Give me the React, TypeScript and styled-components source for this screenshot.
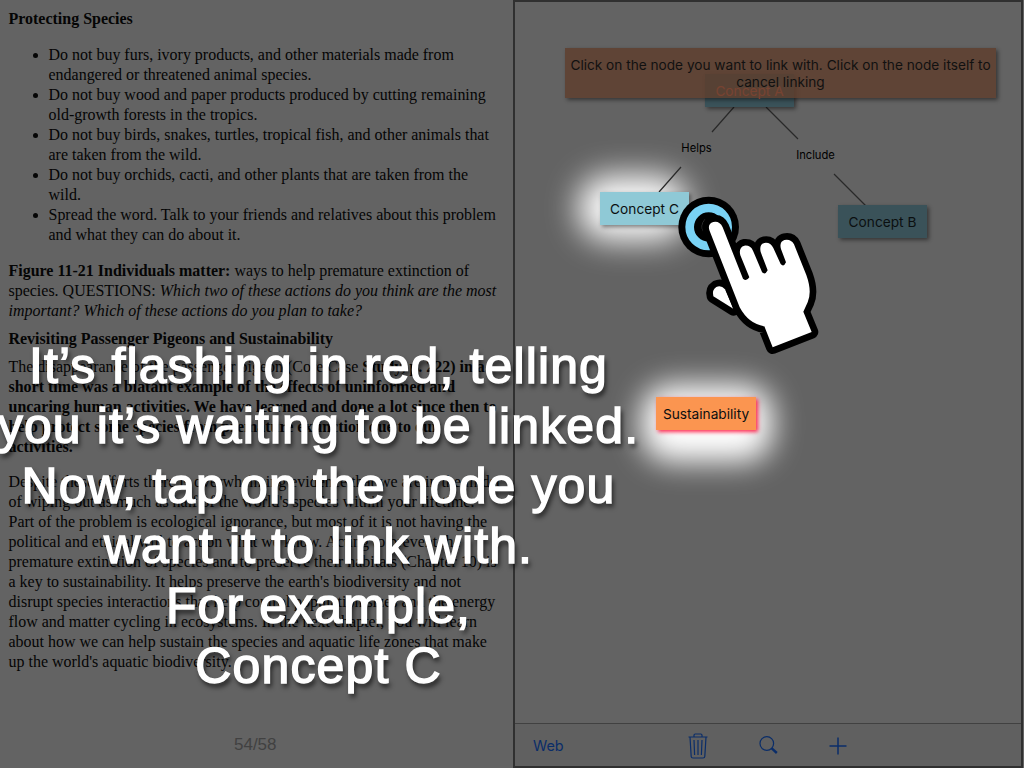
import React from "react";
import styled, { createGlobalStyle } from "styled-components";

const GlobalStyle = createGlobalStyle`
  * { box-sizing: border-box; }
  body { margin: 0; background: #636363; }
`;

const Screen = styled.main`
  position: relative;
  display: flex;
  width: 1024px;
  height: 768px;
  overflow: hidden;
  background: #636363;
`;

const Reader = styled.section`
  display: flex;
  flex-direction: column;
  width: 513px;
  padding: 9px 8px 0 8.5px;
  font: 15.97px/20px "Liberation Serif", serif;
  color: #050505;
`;

const Heading = styled.h2<{ $after: number }>`
  margin: 0 0 ${(p) => p.$after}px;
  font-size: 15.97px;
  line-height: 20px;
`;

const Tips = styled.ul`
  margin: 0 0 16px;
  padding-left: 40px;
`;

const Paragraph = styled.p<{ $after?: number; $bold?: boolean }>`
  margin: 0 0 ${(p) => p.$after ?? 0}px;
  font-weight: ${(p) => (p.$bold ? 700 : 400)};
`;

const Line = styled.span`
  display: block;
  width: max-content;
  white-space: nowrap;
`;

const Light = styled.span`
  font-weight: 400;
`;

const PageCount = styled.footer`
  margin: auto 0 13px;
  padding-right: 3px;
  text-align: center;
  font: 17px/20px "Liberation Sans", sans-serif;
  color: #414141;
`;

const MapPanel = styled.section`
  display: flex;
  flex-direction: column;
  width: 510px;
  height: 768px;
  border: 2px solid #303030;
  font-family: Inter, "Liberation Sans", sans-serif;
`;

const Canvas = styled.div`
  position: relative;
  flex: 1;
`;

const Glow = styled.div<{ $x: number; $y: number; $w: number; $h: number; $blur: number }>`
  position: absolute;
  left: ${(p) => p.$x}px;
  top: ${(p) => p.$y}px;
  width: ${(p) => p.$w}px;
  height: ${(p) => p.$h}px;
  border-radius: 30px;
  background: #fff;
  filter: blur(${(p) => p.$blur}px);
`;

const Links = styled.svg`
  position: absolute;
  inset: 0;
`;

const Node = styled.div<{ $x: number; $y: number; $w: number; $fill: string; $shadow: string; $ink?: string }>`
  position: absolute;
  left: ${(p) => p.$x}px;
  top: ${(p) => p.$y}px;
  display: flex;
  align-items: center;
  justify-content: center;
  width: ${(p) => p.$w}px;
  height: 33px;
  padding-top: 1px;
  background: ${(p) => p.$fill};
  box-shadow: 2px 2px 4px ${(p) => p.$shadow};
  font-size: 13.7px;
  white-space: nowrap;
  color: ${(p) => p.$ink ?? "#0b0f10"};
`;

const LinkLabel = styled.span<{ $x: number; $y: number }>`
  position: absolute;
  left: ${(p) => p.$x}px;
  top: ${(p) => p.$y}px;
  transform: translate(-50%, -50%);
  font-size: 11.2px;
  line-height: 14px;
  color: #000;
`;

const Banner = styled.div`
  position: absolute;
  left: 50px;
  top: 46px;
  width: 431px;
  height: 50px;
  padding-top: 9px;
  background: rgba(94, 61, 45, 0.83);
  box-shadow: 2px 2px 4px rgba(0, 0, 0, 0.45);
  font-size: 13.65px;
  line-height: 17px;
  text-align: center;
  white-space: nowrap;
  color: #111;
`;

const Toolbar = styled.nav`
  display: flex;
  align-items: center;
  height: 43px;
  padding-left: 18px;
  border-top: 1px solid #414141;
  background: #606060;
  font-size: 14.4px;
  color: #0a2d69;
`;

const ToolSlot = styled.span<{ $width: number }>`
  display: flex;
  width: ${(p) => p.$width}px;
  padding-top: 1px;
  align-items: center;
`;

const Hand = styled.svg`
  position: absolute;
  left: 676.67px;
  top: 195px;
`;

const Caption = styled.div`
  position: absolute;
  left: -1.5px;
  top: 336px;
  width: 640px;
  display: flex;
  flex-direction: column;
  align-items: center;
  font: 50px/60px "Liberation Sans", sans-serif;
  letter-spacing: 1.12px;
  color: #fff;
  -webkit-text-stroke: 1.5px #fff;
  text-shadow: 2px 4px 5px rgba(0, 0, 0, 0.75);
`;

const tips = [
  ["Do not buy furs, ivory products, and other materials made from", "endangered or threatened animal species."],
  ["Do not buy wood and paper products produced by cutting remaining", "old-growth forests in the tropics."],
  ["Do not buy birds, snakes, turtles, tropical fish, and other animals that", "are taken from the wild."],
  ["Do not buy orchids, cacti, and other plants that are taken from the", "wild."],
  ["Spread the word. Talk to your friends and relatives about this problem", "and what they can do about it."],
];

const closing = [
  "Despite these efforts there is overwhelming evidence that we are in the midst",
  "of wiping out as much as half of the world's species within your lifetime.",
  "Part of the problem is ecological ignorance, but most of it is not having the",
  "political and ethical will to act on what we know. Acting to prevent the",
  "premature extinction of species and to preserve their habitats (Chapter 10) is",
  "a key to sustainability. It helps preserve the earth's biodiversity and not",
  "disrupt species interactions that help control population sizes and the energy",
  "flow and matter cycling in ecosystems. In the next chapter, you will learn",
  "about how we can help sustain the species and aquatic life zones that make",
  "up the world's aquatic biodiversity.",
];

const caption = [
  "It’s flashing in red, telling",
  "you it’s waiting to be linked.",
  "Now, tap on the node you",
  "want it to link with.",
  "For example,",
  "Concept C",
];

const TrashIcon = () => (
  <svg width="20" height="26" viewBox="0 0 20 26" fill="none" stroke="currentColor">
    <path d="M.5 4h19M6 4V2.2Q6 1 7.2 1h5.6Q14 1 14 2.2V4M2 4l1.200 19.500Q3.300 25 5 25h10q1.700 0 1.800-1.500L18 4" strokeWidth="1.200" />
    <path d="M6 7l.6 15M10 7v15M14 7l-.6 15" strokeWidth="1.200" />
  </svg>
);

const SearchIcon = () => (
  <svg width="19" height="19" viewBox="0 0 19 19" fill="none" stroke="currentColor">
    <circle cx="7.800" cy="7.500" r="6.800" strokeWidth="1.200" />
    <path d="M12.500 12.200l5.300 4.800" strokeWidth="2.400" />
  </svg>
);

const PlusIcon = () => (
  <svg width="18" height="18" viewBox="0 0 18 18" stroke="currentColor" strokeWidth="1.500">
    <path d="M9 .5v17M.5 9h17" />
  </svg>
);

const TapHand = () => (
  <Hand width="143.330" height="161.670" viewBox="350 135 430 485">
    <circle cx="445" cy="231" r="91" fill="#000" />
    <circle cx="445" cy="231" r="57" fill="none" stroke="#79d2f5" strokeWidth="26" />
    <path d="M434 208q-16 20-4 38" fill="none" stroke="#444" strokeWidth="2.500" />
    <g fill="#fff" stroke="#000" strokeWidth="40" strokeLinejoin="round" paintOrder="stroke">
      <path d="M459 439Q454 420 468 411Q482 404 494 418L520 477Z" />
      <path d="M448 243Q440 222 459 216Q478 212 487 232L548 386Q558 396 567 382L540 316Q534 292 552 287Q570 285 578 302L605 366Q614 377 622 361L601 306Q596 284 612 279Q630 276 639 294L661 342Q670 353 677 337L662 297Q656 276 672 270Q692 266 701 283L738 375Q756 425 742 457L729 485L754 546L637 592L612 529Q565 522 538 472Z" />
    </g>
  </Hand>
);

export default function App() {
  return (
    <>
      <GlobalStyle />
      <Screen>
        <Reader>
          <Heading $after={16}><Line>Protecting Species</Line></Heading>
          <Tips>
            {tips.map((tip) => (
              <li key={tip[0]}>{tip.map((t) => <Line key={t}>{t}</Line>)}</li>
            ))}
          </Tips>
          <Paragraph $after={8}>
            <Line><b>Figure 11-21 Individuals matter:</b> ways to help premature extinction of</Line>
            <Line>species. QUESTIONS: <i>Which two of these actions do you think are the most</i></Line>
            <Line><i>important? Which of these actions do you plan to take?</i></Line>
          </Paragraph>
          <Heading $after={8}><Line>Revisiting Passenger Pigeons and Sustainability</Line></Heading>
          <Paragraph $after={15} $bold>
            <Line><Light>The disappearance of the passenger pigeon (Core Case </Light>Study, p. 222) in a</Line>
            <Line>short time was a blatant example of the effects of uninformed and</Line>
            <Line>uncaring human activities. We have learned and done a lot since then to</Line>
            <Line>help protect some species from premature extinction due to our</Line>
            <Line>activities.</Line>
          </Paragraph>
          <Paragraph>{closing.map((t) => <Line key={t}>{t}</Line>)}</Paragraph>
          <PageCount>54/58</PageCount>
        </Reader>
        <MapPanel>
          <Canvas>
            <Glow $x={63} $y={173} $w={110} $h={66} $blur={16} />
            <Glow $x={126} $y={382} $w={132} $h={78} $blur={15} />
            <Links width="506" height="721" stroke="#292929" strokeWidth="1.200">
              <path d="M219 105L197 130M251 105L283 137M166 165L144 190M319 172L351 204" />
            </Links>
            <Node $x={190} $y={72} $w={89} $fill="#3a5259" $shadow="rgba(0,0,0,.45)" $ink="#f0604a">Concept A</Node>
            <Node $x={85} $y={190} $w={89} $fill="#8fc9d6" $shadow="rgba(0,0,0,.45)">Concept C</Node>
            <Node $x={323} $y={203} $w={89} $fill="#3a5259" $shadow="rgba(0,0,0,.45)">Concept B</Node>
            <Node $x={141} $y={395} $w={100} $fill="#fb9550" $shadow="#ff2850">Sustainability</Node>
            <LinkLabel $x={181.500} $y={146}>Helps</LinkLabel>
            <LinkLabel $x={300.500} $y={152.500}>Include</LinkLabel>
            <Banner>
              <div>Click on the node you want to link with. Click on the node itself to</div>
              <div>cancel linking</div>
            </Banner>
          </Canvas>
          <Toolbar>
            <ToolSlot $width={155}>Web</ToolSlot>
            <ToolSlot $width={71}><TrashIcon /></ToolSlot>
            <ToolSlot $width={69.500}><SearchIcon /></ToolSlot>
            <ToolSlot $width={18}><PlusIcon /></ToolSlot>
          </Toolbar>
        </MapPanel>
        <TapHand />
        <Caption>{caption.map((t) => <Line key={t}>{t}</Line>)}</Caption>
      </Screen>
    </>
  );
}
